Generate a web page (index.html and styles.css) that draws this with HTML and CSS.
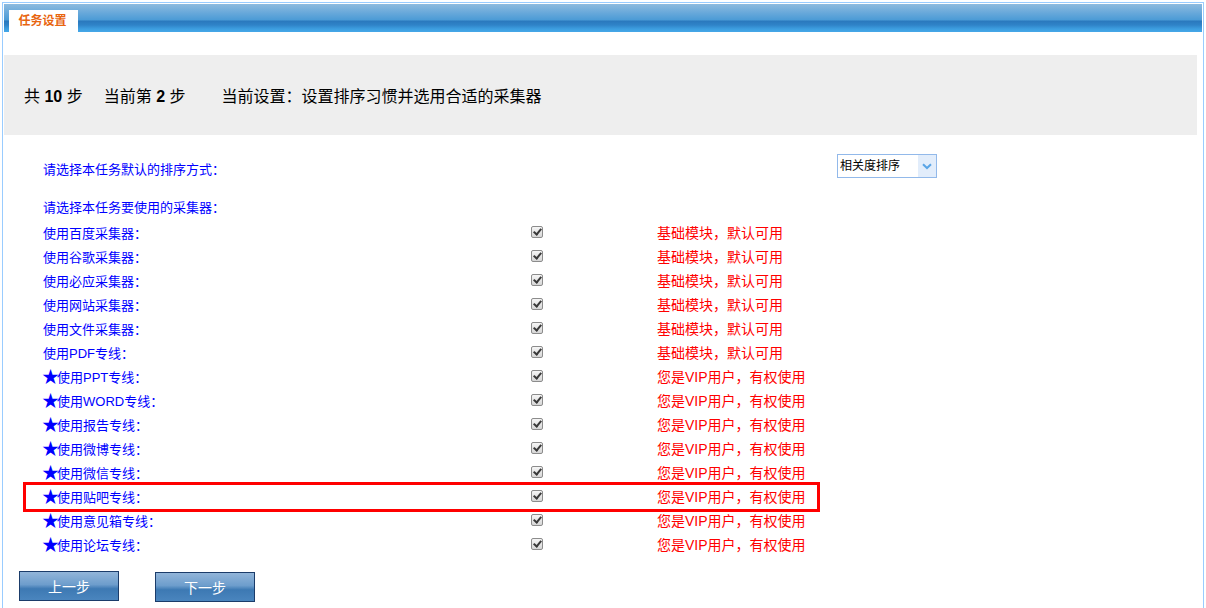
FILE: index.html
```html
<!DOCTYPE html>
<html lang="zh-CN">
<head>
<meta charset="utf-8">
<title>任务设置</title>
<link rel="stylesheet" href="styles.css">
</head>
<body>
<div class="frame">
  <div class="titlebar">
    <div class="tab">任务设置</div>
  </div>
  <div class="stepbar">
    <span class="step1">共 <b>10</b> 步</span>
    <span class="step2">当前第 <b>2</b> 步</span>
    <span class="step3">当前设置：设置排序习惯并选用合适的采集器</span>
  </div>
  <div class="content">
    <div class="sortrow">
      <span class="label">请选择本任务默认的排序方式：</span>
      <div class="select">
        <span class="select-text">相关度排序</span>
        <span class="select-arrow"><svg width="10" height="7" viewBox="0 0 10 7"><path d="M1 1.2 L5 5 L9 1.2" fill="none" stroke="#5aa5e6" stroke-width="2"/></svg></span>
      </div>
    </div>
    <div class="headrow label">请选择本任务要使用的采集器：</div>

    <div class="row"><span class="label">使用百度采集器：</span><span class="cb"></span><span class="note">基础模块，默认可用</span></div>
    <div class="row"><span class="label">使用谷歌采集器：</span><span class="cb"></span><span class="note">基础模块，默认可用</span></div>
    <div class="row"><span class="label">使用必应采集器：</span><span class="cb"></span><span class="note">基础模块，默认可用</span></div>
    <div class="row"><span class="label">使用网站采集器：</span><span class="cb"></span><span class="note">基础模块，默认可用</span></div>
    <div class="row"><span class="label">使用文件采集器：</span><span class="cb"></span><span class="note">基础模块，默认可用</span></div>
    <div class="row"><span class="label">使用PDF专线：</span><span class="cb"></span><span class="note">基础模块，默认可用</span></div>
    <div class="row"><span class="label"><span class="star">★</span>使用PPT专线：</span><span class="cb"></span><span class="note">您是VIP用户，有权使用</span></div>
    <div class="row"><span class="label"><span class="star">★</span>使用WORD专线：</span><span class="cb"></span><span class="note">您是VIP用户，有权使用</span></div>
    <div class="row"><span class="label"><span class="star">★</span>使用报告专线：</span><span class="cb"></span><span class="note">您是VIP用户，有权使用</span></div>
    <div class="row"><span class="label"><span class="star">★</span>使用微博专线：</span><span class="cb"></span><span class="note">您是VIP用户，有权使用</span></div>
    <div class="row"><span class="label"><span class="star">★</span>使用微信专线：</span><span class="cb"></span><span class="note">您是VIP用户，有权使用</span></div>
    <div class="row highlight"><span class="label"><span class="star">★</span>使用贴吧专线：</span><span class="cb"></span><span class="note">您是VIP用户，有权使用</span></div>
    <div class="row"><span class="label"><span class="star">★</span>使用意见箱专线：</span><span class="cb"></span><span class="note">您是VIP用户，有权使用</span></div>
    <div class="row"><span class="label"><span class="star">★</span>使用论坛专线：</span><span class="cb"></span><span class="note">您是VIP用户，有权使用</span></div>
  </div>
  <div class="buttons">
    <button class="btn">上一步</button>
    <button class="btn btn-next">下一步</button>
  </div>
</div>
</body>
</html>
```
FILE: styles.css
```css
html, body {
  margin: 0;
  padding: 0;
  background: #ffffff;
}
body {
  font-family: "Liberation Sans", "Noto Sans CJK SC", sans-serif;
  overflow: hidden;
}
.frame {
  margin: 2px 0 0 2px;
  width: 1198px;
  min-height: 620px;
  border: 1px solid #99ccff;
  padding: 1px;
}
.titlebar {
  height: 28px;
  background: linear-gradient(to bottom, #8ebbdf 0px, #67a8da 9px, #4b9bd6 16px, #2a78bd 17px, #2f83c8 21px, #3d9ee0 25px, #45a8e8 28px);
  display: flex;
  align-items: flex-end;
  padding-left: 5px;
}
.tab {
  width: 69px;
  height: 22px;
  background: #ffffff;
  color: #e8650f;
  font-size: 12px;
  font-weight: bold;
  line-height: 23px;
  text-align: center;
  box-sizing: border-box;
  padding-right: 2px;
}
.stepbar {
  margin-top: 23px;
  margin-right: 5px;
  height: 80px;
  background: #eeeeee;
  display: flex;
  align-items: center;
  padding-left: 20px;
  font-size: 16px;
  color: #000000;
}
.stepbar b {
  font-weight: bold;
}
.step1 { margin-right: 21px; }
.step2 { margin-right: 36px; }
.content {
  padding: 21px 0 0 39px;
  font-size: 13px;
  color: #0000ff;
}
.sortrow {
  display: flex;
  height: 24px;
  align-items: center;
}
.sortrow .label {
  width: 794px;
}
.select {
  width: 100px;
  height: 24px;
  box-sizing: border-box;
  border: 1px solid #92b9ea;
  display: flex;
  align-self: flex-start;
  margin-top: -2px;
  background: #ffffff;
}
.select-text {
  flex: 1;
  color: #000000;
  font-size: 12px;
  line-height: 22px;
  padding-left: 2px;
}
.select-arrow {
  width: 18px;
  background: #e2edfb;
  display: flex;
  align-items: center;
  justify-content: center;
}
.headrow {
  margin-top: 16px;
  height: 24px;
  line-height: 24px;
}
.row {
  display: grid;
  grid-template-columns: 488px 126px auto;
  height: 24px;
  align-items: center;
}
.label {
  color: #0000ff;
  font-size: 13px;
  white-space: nowrap;
}
.star {
  font-size: 17px;
  line-height: 13px;
  display: inline-block;
  width: 14px;
  margin-left: -1px;
  margin-right: 1px;
  vertical-align: -1px;
  font-family: "Noto Sans CJK SC", sans-serif;
}
.cb {
  width: 12px;
  height: 12px;
  box-sizing: border-box;
  border: 1px solid #8c8c8c;
  border-radius: 2px;
  background: linear-gradient(to bottom, #f6f6f6, #d6d6d6);
  position: relative;
}
.cb::after {
  content: "";
  position: absolute;
  left: 3px;
  top: 0px;
  width: 3px;
  height: 6px;
  border-right: 2px solid #3a3a3a;
  border-bottom: 2px solid #3a3a3a;
  transform: rotate(40deg);
}
.note {
  color: #ff0000;
  font-size: 14px;
  white-space: nowrap;
}
.highlight {
  position: relative;
}
.highlight::before {
  content: "";
  position: absolute;
  left: -20px;
  top: -2px;
  width: 797px;
  height: 30px;
  box-sizing: border-box;
  border: 3px solid #ff0000;
}
.buttons {
  display: flex;
  gap: 36px;
  padding: 15px 0 0 15px;
  align-items: flex-start;
}
.btn {
  width: 100px;
  height: 30px;
  border: 1px solid #1b3c6a;
  background: linear-gradient(to bottom, #92b5d9 0%, #6d9dcc 45%, #3d79b3 60%, #4a85be 100%);
  color: #ffffff;
  font-family: "Liberation Sans", "Noto Sans CJK SC", sans-serif;
  font-size: 14px;
  padding: 0;
  margin: 0;
}
.btn-next {
  margin-top: 1px;
}
```
